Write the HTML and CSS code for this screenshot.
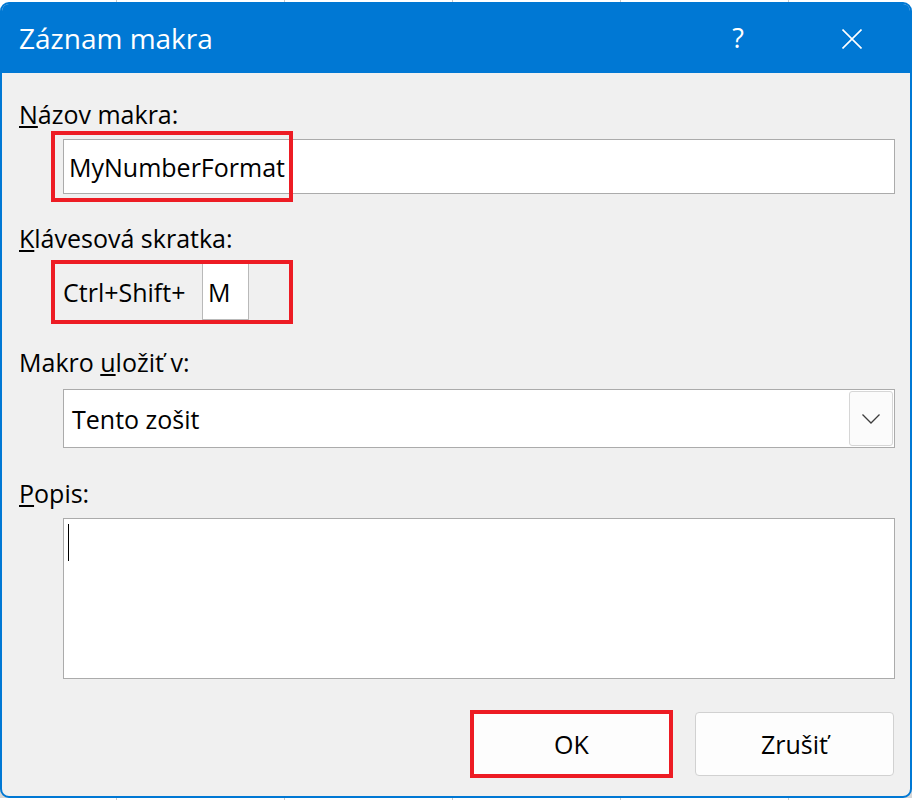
FILE: index.html
```html
<!DOCTYPE html>
<html lang="sk">
<head>
<meta charset="utf-8">
<title>Záznam makra</title>
<link rel="stylesheet" href="styles.css">
</head>
<body>
<div class="dialog">
  <div class="titlebar">
    <span class="title">Záznam makra</span>
    <span class="help">?</span>
    <svg class="close" width="20" height="20" viewBox="0 0 20 20"><path d="M0.5 0.5L19.5 19.5M19.5 0.5L0.5 19.5"/></svg>
  </div>

  <div class="content">
    <div class="label"><u>N</u>ázov makra:</div>
    <div class="field name">
      <span class="value">MyNumberFormat</span>
      <span class="mark"></span>
    </div>

    <div class="label"><u>K</u>lávesová skratka:</div>
    <div class="shortcut">
      <span class="prefix">Ctrl+Shift+</span>
      <span class="key">M</span>
    </div>

    <div class="label">Makro <u>u</u>ložiť v:</div>
    <div class="field select">
      <span class="value">Tento zošit</span>
      <span class="arrow"><svg width="18" height="10" viewBox="0 0 18 10"><path d="M0.5 0.5L9 9L17.5 0.5"/></svg></span>
    </div>

    <div class="label"><u>P</u>opis:</div>
    <div class="field memo"><span class="caret"></span></div>

    <div class="buttons">
      <button class="btn ok">OK</button>
      <button class="btn">Zrušiť</button>
    </div>
  </div>
</div>
</body>
</html>
```

FILE: styles.css
```css
/* page behind the dialog: a sliver of the worksheet grid */
body {
  margin: 0;
  font-family: "Open Sans", "Noto Sans", sans-serif;
  color: #000;
  background:
    repeating-linear-gradient(90deg, transparent 0 116px, #c9c9c9 116px 117px, transparent 117px 168px),
    linear-gradient(#ffffff 0 400px, #d6d6d6 400px);
}

.dialog {
  box-sizing: border-box;
  width: 912px;
  height: 796px;
  margin-top: 2px;
  border: 2px solid #0078d4;
  border-radius: 9px;
  background: #f0f0f0;
  overflow: hidden;
  display: flex;
  flex-direction: column;
}

/* Title bar */
.titlebar {
  height: 69px;
  flex: none;
  display: flex;
  align-items: center;
  padding-left: 17px;
  background: #0078d4;
  color: #fff;
}

.title {
  flex: 1;
  font-size: 28px;
  margin-top: -2px;
}

.help {
  font-size: 27px;
  margin-right: 98px;
  margin-top: -2px;
}

.close {
  margin-right: 48px;
  fill: none;
  stroke: #fff;
  stroke-width: 1.6;
}

/* Form body */
.content {
  padding: 0 15px 0 17px;
  display: flex;
  flex-direction: column;
  font-size: 25px;
}

.label {
  height: 30px;
  line-height: 30px;
  white-space: nowrap;
}

.label u {
  text-decoration-thickness: 2px;
  text-underline-offset: 2px;
}

.label:nth-of-type(1) { margin-top: 26px; }

.field {
  box-sizing: border-box;
  margin-left: 44px;
  border: 1px solid #ababab;
  background: #fff;
  display: flex;
  align-items: center;
}

.name {
  position: relative;
  height: 55px;
  margin-top: 10px;
  margin-bottom: 29px;
  padding-left: 5px;
}

/* red highlight drawn over the field */
.mark {
  position: absolute;
  left: -13px;
  top: -9px;
  width: 242px;
  height: 71px;
  box-sizing: border-box;
  border: 4px solid #ed1c24;
}

.shortcut {
  box-sizing: border-box;
  width: 242px;
  height: 64px;
  margin: 7px 0 23px 32px;
  border: 4px solid #ed1c24;
  display: flex;
}

.prefix {
  width: 147px;
  padding-left: 8px;
  box-sizing: border-box;
  display: flex;
  align-items: center;
  white-space: nowrap;
}

.key {
  width: 47px;
  box-sizing: border-box;
  padding-left: 5px;
  border: 1px solid #b9b9b9;
  border-top: none;
  background: #fff;
  display: flex;
  align-items: center;
}

.select {
  height: 59px;
  margin-top: 12px;
  margin-bottom: 30px;
  padding: 0 1px 0 8px;
}

.select .value { flex: 1; }

.arrow {
  box-sizing: border-box;
  width: 44px;
  height: 55px;
  border: 1px solid #d6d6d6;
  border-radius: 3px;
  background: #fbfbfb;
  display: flex;
  align-items: center;
  justify-content: center;
}

.arrow svg {
  fill: none;
  stroke: #3c3c3c;
  stroke-width: 1.3;
}

.memo {
  height: 161px;
  margin-top: 10px;
  align-items: flex-start;
  padding: 5px 0 0 4px;
}

.caret {
  width: 1px;
  height: 37px;
  background: #000;
}

/* Buttons */
.buttons {
  margin-top: 33px;
  display: flex;
  justify-content: flex-end;
  gap: 24px;
  padding-right: 1px;
}

.btn {
  width: 199px;
  height: 64px;
  border: 1px solid #d1d1d1;
  border-radius: 4px;
  background: #fdfdfd;
  font: inherit;
  color: #000;
}

.btn.ok {
  border-radius: 0;
  outline: 4px solid #ed1c24;
  outline-offset: -2px;
}
```
